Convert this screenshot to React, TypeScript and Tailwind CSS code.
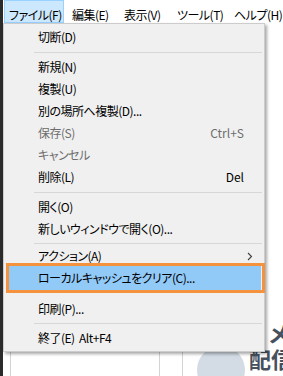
import React from "react";

type RowProps = {
  label: string;
  shortcut?: string;
  disabled?: boolean;
  submenu?: boolean;
  className?: string;
};

function Chevron() {
  return (
    <svg width="6" height="9" viewBox="0 0 6 9" fill="none">
      <path d="M1 1 L4.5 4.5 L1 8" stroke="#404040" strokeWidth="1.1" />
    </svg>
  );
}

function MenuRow({ label, shortcut, disabled, submenu, className = "h-[22px]" }: RowProps) {
  return (
    <div className={`flex items-center pl-[34px] ${className} ${disabled ? "text-[#6d6d6d]" : "text-black"}`}>
      <span className="flex-1 whitespace-pre">{label}</span>
      {shortcut && <span className="whitespace-nowrap tracking-normal">{shortcut}</span>}
      <span className="flex w-[20px] items-center pl-[3px]">{submenu && <Chevron />}</span>
    </div>
  );
}

function Sep({ className = "h-[8px]" }: { className?: string }) {
  return (
    <div className={`flex items-center pl-[30px] pr-[2px] ${className}`}>
      <div className="h-px flex-1 bg-[#d7d7d7]" />
    </div>
  );
}

function MenuBar() {
  return (
    <div className="flex h-[23px] shrink-0 bg-white pl-[1px] leading-[14px] tracking-[-0.5px] text-black whitespace-nowrap">
      <div className="w-[60px] shrink-0 border border-[#99d1ff] bg-[#cce8ff] pl-[4px] pt-[7px]">ファイル(F)</div>
      <div className="ml-[3px] w-[52px] shrink-0 border border-transparent pl-[4px] pt-[7px]">編集(E)</div>
      <div className="w-[53px] shrink-0 border border-transparent pl-[4px] pt-[7px]">表示(V)</div>
      <div className="w-[57px] shrink-0 border border-transparent pl-[4px] pt-[7px]">ツール(T)</div>
      <div className="shrink-0 border border-transparent pl-[4px] pt-[7px]">ヘルプ(H)</div>
    </div>
  );
}

function DocIcon() {
  return (
    <svg width="15" height="12" viewBox="0 0 15 12">
      <rect x="0" y="1" width="3" height="11" fill="#1d5aa6" />
      <path d="M4 0 H11 L15 4 V12 H4 Z" fill="#2f7bd0" />
      <path d="M11 0 V4 H15 Z" fill="#9cc3ec" />
    </svg>
  );
}

function Background() {
  return (
    <div className="flex flex-1 flex-col">
      <div className="flex h-[296px] justify-end">
        <div className="flex w-[30px] flex-col text-black">
          <div className="h-[10px]" />
          <div className="h-[12px] pl-[15px]">
            <DocIcon />
          </div>
          <div className="h-[14px] border-b border-[#e3e3e3]" />
          <div className="h-[36px] border-b border-[#e3e3e3]" />
          <div className="flex h-[26px] items-center pl-[1px] whitespace-nowrap text-[#1a5fb4]">フォーム</div>
          <div className="flex h-[28px] items-center pl-[4px] whitespace-nowrap">文字</div>
          <div className="h-[9px] border-b border-[#d6d6d6]" />
          <div className="h-[23px]" />
          <div className="flex h-[22px] items-center pl-[12px] whitespace-nowrap">ローカル</div>
          <div className="h-[2px]" />
          <div className="h-[13px] bg-[#d9d9d9]" />
          <div className="h-[9px] border-b border-[#e3e3e3]" />
          <div className="flex h-[30px] items-center pl-[10px] whitespace-nowrap text-[#1a5fb4]">配信</div>
          <div className="flex h-[32px] items-center whitespace-nowrap">ワード</div>
          <div className="h-[16px] border-b border-[#e3e3e3]" />
          <div className="h-[14px]" />
        </div>
      </div>
      <div className="flex h-[57px]">
        <div className="w-[8px] shrink-0 border-r border-[#d4d4d4]" />
        <div className="w-[149px] shrink-0 border-r border-[#d4d4d4]" />
        <div className="w-[23px] shrink-0 border-r border-[#d4d4d4]" />
        <div className="flex flex-1">
          <div className="ml-[14px] mt-[27px] h-[48px] w-[48px] shrink-0 rounded-full bg-[#d3dce5]" />
          <div className="ml-[4px] text-[22px] font-bold leading-[26px] whitespace-nowrap text-[#47515e]">
            <div className="pl-[20px]">メール</div>
            <div>配信</div>
            <div>(PMS)</div>
          </div>
        </div>
      </div>
    </div>
  );
}

function FileMenu() {
  return (
    <div className="absolute left-[3px] top-[23px] flex h-[329px] w-[262px] flex-col border border-[#cccccc] bg-[#f0f0f0] pt-[2px] tracking-[-0.5px] shadow-[2px_2px_3px_rgba(0,0,0,0.35)]">
      <MenuRow label="切断(D)" />
      <Sep />
      <MenuRow label="新規(N)" />
      <MenuRow label="複製(U)" />
      <MenuRow label="別の場所へ複製(D)..." />
      <MenuRow label="保存(S)" shortcut="Ctrl+S" disabled />
      <MenuRow label="キャンセル" disabled />
      <MenuRow label="削除(L)" shortcut="Del" />
      <Sep />
      <MenuRow label="開く(O)" />
      <MenuRow label="新しいウィンドウで開く(O)..." />
      <Sep className="h-[6px]" />
      <MenuRow label="アクション(A)" submenu className="h-[20px]" />
      <div className="relative ml-[5px] mr-[3px] flex h-[24px] items-center bg-[#91c9f7] pl-[29px] text-black">
        <span className="whitespace-nowrap">ローカルキャッシュをクリア(C)...</span>
        <div className="absolute -bottom-[3px] -left-[3px] -right-[4px] -top-[3px] border-[3px] border-[#f5923e]" />
      </div>
      <div className="h-[8px]" />
      <MenuRow label="印刷(P)..." />
      <Sep className="h-[7px]" />
      <MenuRow label="終了(E)  Alt+F4" />
    </div>
  );
}

export default function App() {
  return (
    <div className="relative flex h-[376px] w-[283px] overflow-hidden bg-white font-['Noto_Sans_CJK_JP','Noto_Sans',sans-serif] text-[12px] [font-feature-settings:'palt']">
      <div className="w-[3px] shrink-0 bg-[#2b2b2b]" />
      <div className="flex flex-1 flex-col">
        <MenuBar />
        <Background />
      </div>
      <FileMenu />
    </div>
  );
}
